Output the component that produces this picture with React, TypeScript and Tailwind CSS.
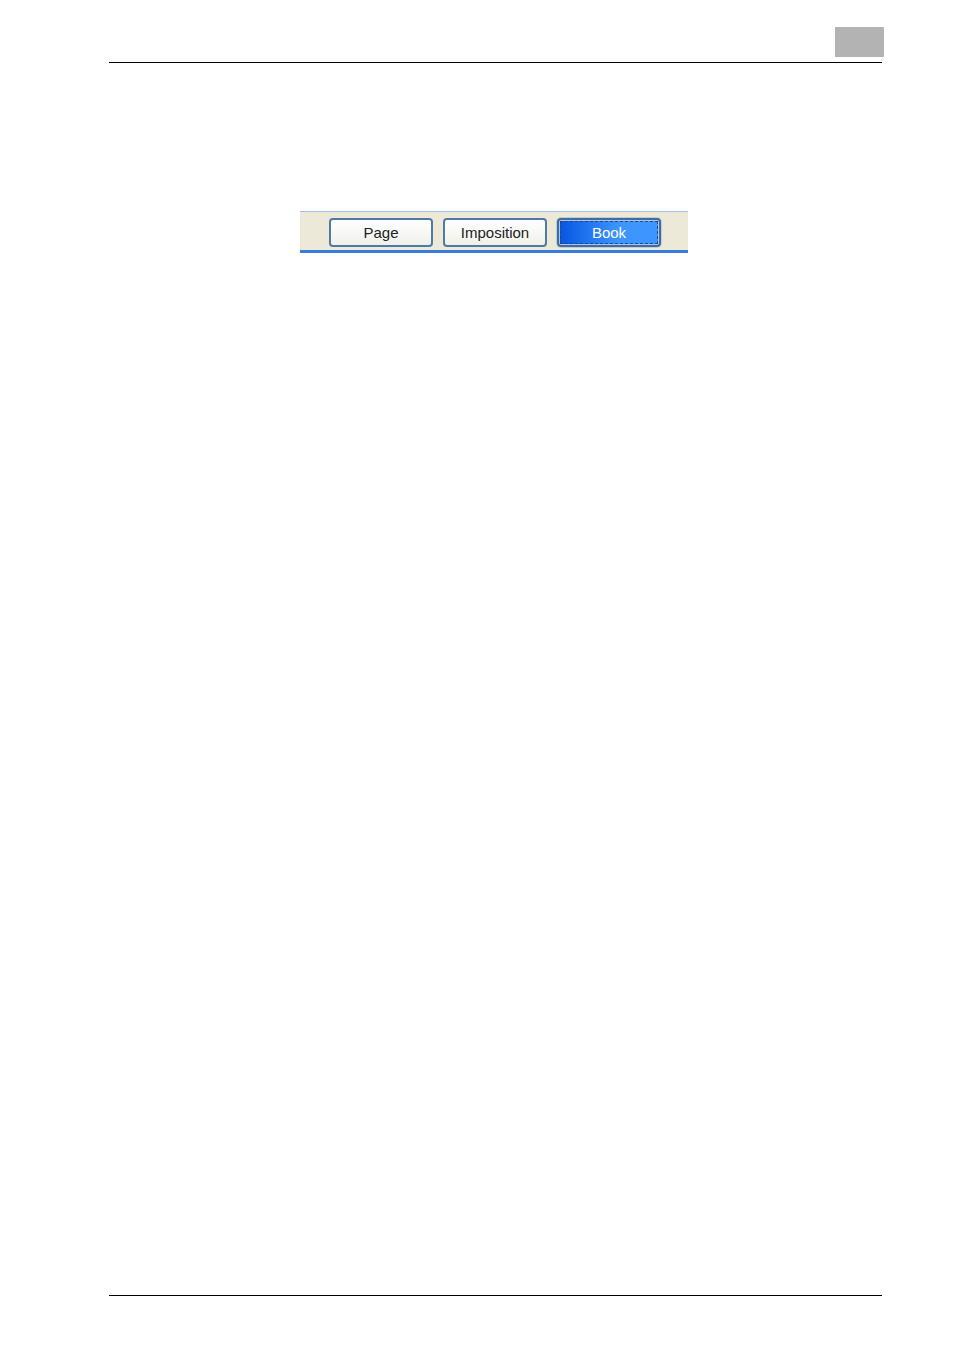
import { useState } from "react";
import clsx from "clsx";

const TABS = ["Page", "Imposition", "Book"];

export default function App() {
  const [active, setActive] = useState("Book");

  return (
    <div className="flex min-h-screen flex-col bg-white pt-[27px] pr-[72px] pb-[55px] pl-[109px] font-['Liberation_Sans',Arial,sans-serif]">
      {/* Running header with the chapter tab */}
      <header className="flex justify-end border-b border-black pb-[5px]">
        <div className="-mr-[2px] h-[30px] w-[49px] rounded-r-[1px] bg-[#b3b3b3]" />
      </header>

      <main className="grow pt-[148px] pl-[191px]">
        <nav
          aria-label="View"
          className="flex h-[42px] w-[388px] max-w-full gap-[10px] border-t border-b-3 border-t-[#a3bdf0] border-b-[#3a7edb] bg-[#ece9d8] pt-[6px] pl-[29px]"
        >
          {TABS.map((tab) => (
            <button
              key={tab}
              type="button"
              aria-pressed={tab === active}
              onClick={() => setActive(tab)}
              className={clsx(
                "h-[29px] w-[104px] rounded-[4px] border-2 p-px text-[15px] leading-5",
                tab === active
                  ? "border-[#3f6d9f] bg-[#a9c6ee] text-white ring-1 ring-[#c3cdd0]"
                  : "border-[#4f7ba3] bg-linear-to-b from-white to-[#f0f0ea] text-[#222222]",
              )}
            >
              <span
                className={clsx(
                  "flex h-full items-center justify-center border border-dashed bg-origin-border",
                  tab === active
                    ? "border-[#23468c] bg-linear-to-r from-[#0855e2] to-[#3d95ff] to-60%"
                    : "border-transparent",
                )}
              >
                {tab}
              </span>
            </button>
          ))}
        </nav>
      </main>

      <footer className="border-t border-black" />
    </div>
  );
}
